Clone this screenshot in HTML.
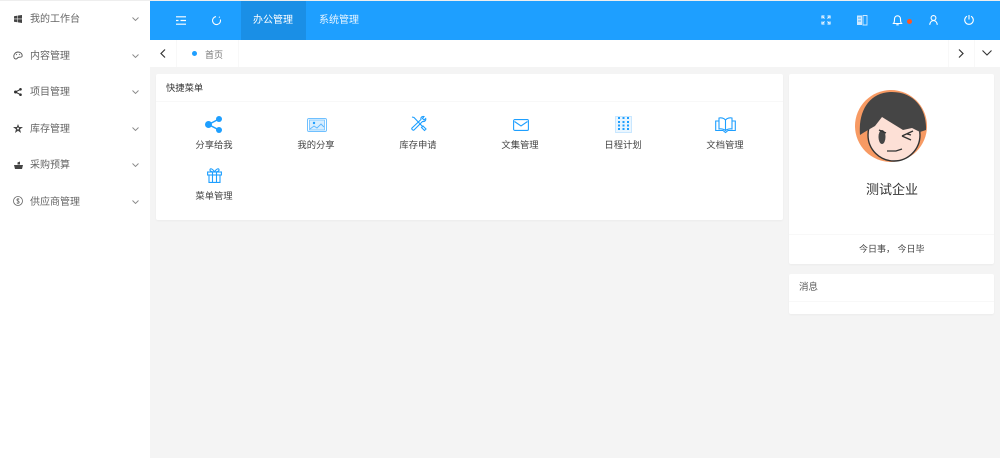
<!DOCTYPE html>
<html lang="zh">
<head>
<meta charset="utf-8">
<style>
html,body{margin:0;padding:0;width:1000px;height:458px;overflow:hidden;background:#f4f4f4;font-family:"Liberation Sans","Noto Sans CJK SC",sans-serif;}
.a{position:absolute;}
.t{position:absolute;white-space:nowrap;font-size:10px;line-height:14px;color:#333;}
svg{position:absolute;overflow:visible;}
.m{color:#666;}
.q{width:80px;text-align:center;color:#444;font-size:9.3px;}
.ic{fill:none;stroke:#1e9fff;stroke-width:1.1;}
.w{fill:none;stroke:#fff;stroke-width:1.1;}
</style>
</head>
<body>
<div class="a" style="left:0;top:0;width:1000px;height:1px;background:#eee"></div>
<div class="a" style="left:0;top:1px;width:150px;height:457px;background:#fff"></div>
<div class="a" style="left:150px;top:1px;width:850px;height:39px;background:#1e9fff"></div>
<div class="a" style="left:241px;top:1px;width:65px;height:39px;background:#1a8fe6"></div>
<div class="a" style="left:150px;top:40px;width:850px;height:27px;background:#fff"></div>
<div class="a" style="left:176px;top:40px;width:1px;height:27px;background:#f8f8f8"></div>
<div class="a" style="left:238px;top:40px;width:1px;height:27px;background:#f8f8f8"></div>
<div class="a" style="left:948px;top:40px;width:1px;height:27px;background:#f8f8f8"></div>
<div class="a" style="left:974px;top:40px;width:1px;height:27px;background:#f8f8f8"></div>

<!-- sidebar -->
<svg style="left:14px;top:15px" width="8" height="8" viewBox="0 0 8 8"><path d="M0 1.200l3.500-.6v3H0zM4 .5L8 0v3.600H4zM0 4.200h3.500v3L0 6.700zM4 4.200h4V8l-4-.6z" fill="#444"/></svg>
<svg style="left:13px;top:51px" width="10" height="9" viewBox="0 0 10 9"><path d="M1 6.500C.2 3.500 2.500 1 5 1s4.800 2 4 4.500C8 7 6 5.500 5 6.500S4 8 2.800 8 1.300 7.300 1 6.500z" fill="none" stroke="#555" stroke-width=".9"/><path d="M3 4l1-1M6 3l1 1" stroke="#555" stroke-width=".7"/></svg>
<svg style="left:14px;top:88px" width="8" height="8" viewBox="0 0 8 8"><circle cx="1.500" cy="4" r="1.500" fill="#333"/><circle cx="6.500" cy="1.300" r="1.300" fill="#333"/><circle cx="6.500" cy="6.700" r="1.300" fill="#333"/><path d="M1.500 4l5-2.700M1.500 4l5 2.700" stroke="#333"/></svg>
<svg style="left:13px;top:124px" width="10" height="9" viewBox="0 0 10 9"><path d="M5 0l1.200 3H10L7 5.200 8 9 5 6.800 2 9l1-3.800L0 3h3.800z" fill="#444"/><circle cx="5" cy="4.500" r="1" fill="#fff"/></svg>
<svg style="left:14px;top:161px" width="9" height="8" viewBox="0 0 9 8"><path d="M3.500 3.500V1.500L6 .5v3zM0 4h9L8 8H1z" fill="#444"/></svg>
<svg style="left:13px;top:196px" width="10" height="10" viewBox="0 0 10 10"><circle cx="5" cy="5" r="4.500" fill="none" stroke="#666" stroke-width=".8"/><path d="M6.300 3.300C5.500 2.500 3.800 2.800 3.800 3.900S6.300 5 6.300 6.200 4.500 7.500 3.700 6.700M5 2v6" fill="none" stroke="#666" stroke-width=".7"/></svg>
<div class="t m" style="left:30px;top:13px">我的工作台</div>
<div class="t m" style="left:30px;top:50px">内容管理</div>
<div class="t m" style="left:30px;top:86px">项目管理</div>
<div class="t m" style="left:30px;top:123px">库存管理</div>
<div class="t m" style="left:30px;top:159px">采购预算</div>
<div class="t m" style="left:30px;top:196px">供应商管理</div>
<svg style="left:132px;top:17px" width="7" height="4" viewBox="0 0 7 4"><path d="M.5.500l3 3 3-3" fill="none" stroke="#888" stroke-width=".9"/></svg>
<svg style="left:132px;top:54px" width="7" height="4" viewBox="0 0 7 4"><path d="M.5.500l3 3 3-3" fill="none" stroke="#888" stroke-width=".9"/></svg>
<svg style="left:132px;top:90px" width="7" height="4" viewBox="0 0 7 4"><path d="M.5.500l3 3 3-3" fill="none" stroke="#888" stroke-width=".9"/></svg>
<svg style="left:132px;top:127px" width="7" height="4" viewBox="0 0 7 4"><path d="M.5.500l3 3 3-3" fill="none" stroke="#888" stroke-width=".9"/></svg>
<svg style="left:132px;top:163px" width="7" height="4" viewBox="0 0 7 4"><path d="M.5.500l3 3 3-3" fill="none" stroke="#888" stroke-width=".9"/></svg>
<svg style="left:132px;top:200px" width="7" height="4" viewBox="0 0 7 4"><path d="M.5.500l3 3 3-3" fill="none" stroke="#888" stroke-width=".9"/></svg>

<!-- header -->
<svg style="left:176px;top:16px" width="10" height="9" viewBox="0 0 10 9"><path d="M0 .8h10M0 4.500h2.500M4.500 4.500H10M0 8.200h10" stroke="#fff" stroke-width="1.200"/></svg>
<svg style="left:212px;top:16px" width="9" height="9" viewBox="0 0 9 9"><path d="M4 .6A4 4 0 1 0 8.400 3.500" class="w"/><path d="M7 1.500L7.800 .8" class="w"/></svg>
<div class="t" style="left:253px;top:14px;color:#fff;font-size:10px">办公管理</div>
<div class="t" style="left:319px;top:14px;color:#e8f5ff;font-size:10px">系统管理</div>
<svg style="left:822px;top:16px" width="8" height="8" viewBox="0 0 8 8"><path d="M0 2.500V0h2.500M5.500 0H8v2.500M8 5.500V8H5.500M2.500 8H0V5.500M1 1l1.500 1.500M7 1L5.500 2.500M7 7L5.500 5.500M1 7l1.500-1.500" class="w"/></svg>
<svg style="left:857px;top:15px" width="10" height="10" viewBox="0 0 10 10"><path d="M0 .5h5V10H0z" fill="#cfe9ff"/><path d="M6 .5h4V10H6z" fill="none" stroke="#cfe9ff" stroke-width=".9"/><path d="M1 3h3M1 6h3M7 3h2M7 6h2" stroke="#1e9fff" stroke-width=".8"/></svg>
<svg style="left:893px;top:15px" width="9" height="11" viewBox="0 0 9 11"><path d="M.5 8.500C1.500 7.500 1.500 6 1.500 4S3 .8 4.500.8 7.500 2 7.500 4 7.500 7.500 8.500 8.500zM3.300 9.800h2.400" class="w"/></svg>
<div class="a" style="left:906.500px;top:18.500px;width:5px;height:5px;border-radius:50%;background:#ff5722"></div>
<svg style="left:929px;top:15px" width="9" height="10" viewBox="0 0 9 10"><circle cx="4.500" cy="3" r="2.400" class="w"/><path d="M.7 9.800C1 7.300 2.500 5.600 4.500 5.600S8 7.300 8.300 9.800" class="w"/></svg>
<svg style="left:964px;top:15px" width="10" height="10" viewBox="0 0 10 10"><path d="M3 1.200a4.300 4.300 0 1 0 4 0M5 0v4.500" class="w"/></svg>

<!-- tab bar -->
<svg style="left:160px;top:49px" width="6" height="9" viewBox="0 0 6 9"><path d="M5 .5l-4 4 4 4" fill="none" stroke="#333" stroke-width="1.200"/></svg>
<div class="a" style="left:192px;top:51px;width:5px;height:5px;border-radius:50%;background:#1e9fff"></div>
<div class="t" style="left:205px;top:48px;color:#777;font-size:9px">首页</div>
<svg style="left:958px;top:49px" width="6" height="9" viewBox="0 0 6 9"><path d="M1 .5l4 4-4 4" fill="none" stroke="#333" stroke-width="1.200"/></svg>
<svg style="left:982px;top:50px" width="10" height="6" viewBox="0 0 10 6"><path d="M.5.500L5 5 9.500.5" fill="none" stroke="#333" stroke-width="1.100"/></svg>

<!-- main card -->
<div class="a" style="left:156px;top:74px;width:627px;height:146px;background:#fff;border-radius:2px;box-shadow:0 1px 2px rgba(0,0,0,.04)"></div>
<div class="a" style="left:156px;top:101px;width:627px;height:1px;background:#f8f8f8"></div>
<div class="t" style="left:166px;top:81px;color:#333;font-size:9.300px">快捷菜单</div>

<svg style="left:205px;top:116px" width="18" height="17" viewBox="0 0 18 17"><circle cx="3.500" cy="8.500" r="3.500" fill="#1e9fff"/><circle cx="14" cy="3" r="3" fill="#1e9fff"/><circle cx="14" cy="14" r="3" fill="#1e9fff"/><path d="M3.500 8.500L14 3M3.500 8.500L14 14" stroke="#1e9fff" stroke-width="1.500"/></svg>
<svg style="left:307px;top:118px" width="20" height="14" viewBox="0 0 20 14"><rect x=".5" y=".5" width="19" height="13" rx="1.500" fill="none" stroke="#6fc0ff" stroke-width="1"/><rect x="2.500" y="2" width="15" height="10" fill="#d8eeff" stroke="#6fc0ff" stroke-width=".8"/><circle cx="7" cy="5" r="1.200" fill="#1e9fff"/><path d="M3 11l4-3 3 2 4-4 3 3" fill="none" stroke="#5ab6ff" stroke-width=".9"/></svg>
<svg style="left:411px;top:116px" width="16" height="16" viewBox="0 0 16 16"><path d="M1 1l2 .5 8.500 9M10.500 11.500l3 3 1.500-1.500-3-3zM13 .5c-2-.5-3.500 1-3 3L1 12c-.8 1 .8 2.800 2 2l8.500-8.500c2 .5 3.700-1 3.200-3L13 4l-1.500-1.500z" class="ic"/></svg>
<svg style="left:513px;top:119px" width="16" height="12" viewBox="0 0 16 12"><rect x=".6" y=".6" width="14.800" height="10.800" rx="1.200" class="ic" stroke-width="1.200"/><path d="M1.500 2.500L8 7l6.500-4.500" class="ic"/></svg>
<svg style="left:615px;top:116px" width="17" height="17" viewBox="0 0 17 17"><rect x=".5" y=".5" width="16" height="16" fill="#eaf6ff" stroke="#bfe3ff" stroke-width=".8"/><g fill="#1e9fff"><rect x="3" y="1" width="2" height="2"/><rect x="7.500" y="1" width="2" height="2"/><rect x="12" y="1" width="2" height="2"/><rect x="3" y="5" width="2" height="2"/><rect x="7.500" y="5" width="2" height="2"/><rect x="12" y="5" width="2" height="2"/><rect x="3" y="8.500" width="2" height="2"/><rect x="7.500" y="8.500" width="2" height="2"/><rect x="12" y="8.500" width="2" height="2"/><rect x="3" y="12" width="2" height="2"/><rect x="7.500" y="12" width="2" height="2"/><rect x="12" y="12" width="2" height="2"/></g></svg>
<svg style="left:715px;top:117px" width="21" height="16" viewBox="0 0 21 16"><path d="M10.500 3C9 1 6 .5 4 1v11c2-.4 5 0 6.500 1.500C12 12 15 11.600 17 12V1c-2-.5-5 0-6.500 2zM10.500 3v10.500M4 4H.7v9.500H8l2.500 2 2.500-2h7.300V4H17" class="ic"/></svg>
<svg style="left:207px;top:168px" width="15" height="15" viewBox="0 0 15 15"><rect x=".6" y="4" width="13.800" height="3" class="ic"/><path d="M2 7v7.400h11V7M5.500 4v10.400M9.500 4v10.400M7.500 4C6 1 3.500 0 3 1.500S5 4 7.500 4zM7.500 4C9 1 11.500 0 12 1.500S10 4 7.500 4z" class="ic"/></svg>

<div class="t q" style="left:174px;top:138px">分享给我</div>
<div class="t q" style="left:276px;top:138px">我的分享</div>
<div class="t q" style="left:378px;top:138px">库存申请</div>
<div class="t q" style="left:480px;top:138px">文集管理</div>
<div class="t q" style="left:583px;top:138px">日程计划</div>
<div class="t q" style="left:685px;top:138px">文档管理</div>
<div class="t q" style="left:174px;top:189px">菜单管理</div>

<!-- profile card -->
<div class="a" style="left:789px;top:74px;width:205px;height:190px;background:#fff;border-radius:2px;box-shadow:0 1px 2px rgba(0,0,0,.04)"></div>
<div class="a" style="left:789px;top:234px;width:205px;height:1px;background:#f8f8f8"></div>
<svg style="left:855px;top:90px" width="72" height="72" viewBox="0 0 72 72">
<circle cx="36" cy="36" r="36" fill="#f79a63"/>
<circle cx="39" cy="45" r="26" fill="#fde0d6" stroke="#333" stroke-width="1.400"/>
<path d="M5 45C3 20 15 2 37 2C60 2 72 20 71 40L65 42L57 38L48 40L27 27L20 36L13 40L8 43Z" fill="#454545"/>
<ellipse cx="27" cy="47" rx="3.500" ry="7" fill="#454545"/>
<path d="M24 40l7 3M47 46l11-5M47 46l9 4M52 44l4 1" fill="none" stroke="#333" stroke-width="1.400"/>
<path d="M32 61h9l6-2" fill="none" stroke="#333" stroke-width="1.200"/>
</svg>
<div class="t" style="left:866px;top:181px;font-size:13px;line-height:17px;color:#333">测试企业</div>
<div class="t" style="left:859px;top:242px;color:#444;font-size:9px">今日事， 今日毕</div>

<!-- message card -->
<div class="a" style="left:789px;top:274px;width:205px;height:40px;background:#fff;border-radius:2px;box-shadow:0 1px 2px rgba(0,0,0,.04)"></div>
<div class="a" style="left:789px;top:301px;width:205px;height:1px;background:#f8f8f8"></div>
<div class="t" style="left:799px;top:281px;color:#555;font-size:9.500px">消息</div>
</body>
</html>
